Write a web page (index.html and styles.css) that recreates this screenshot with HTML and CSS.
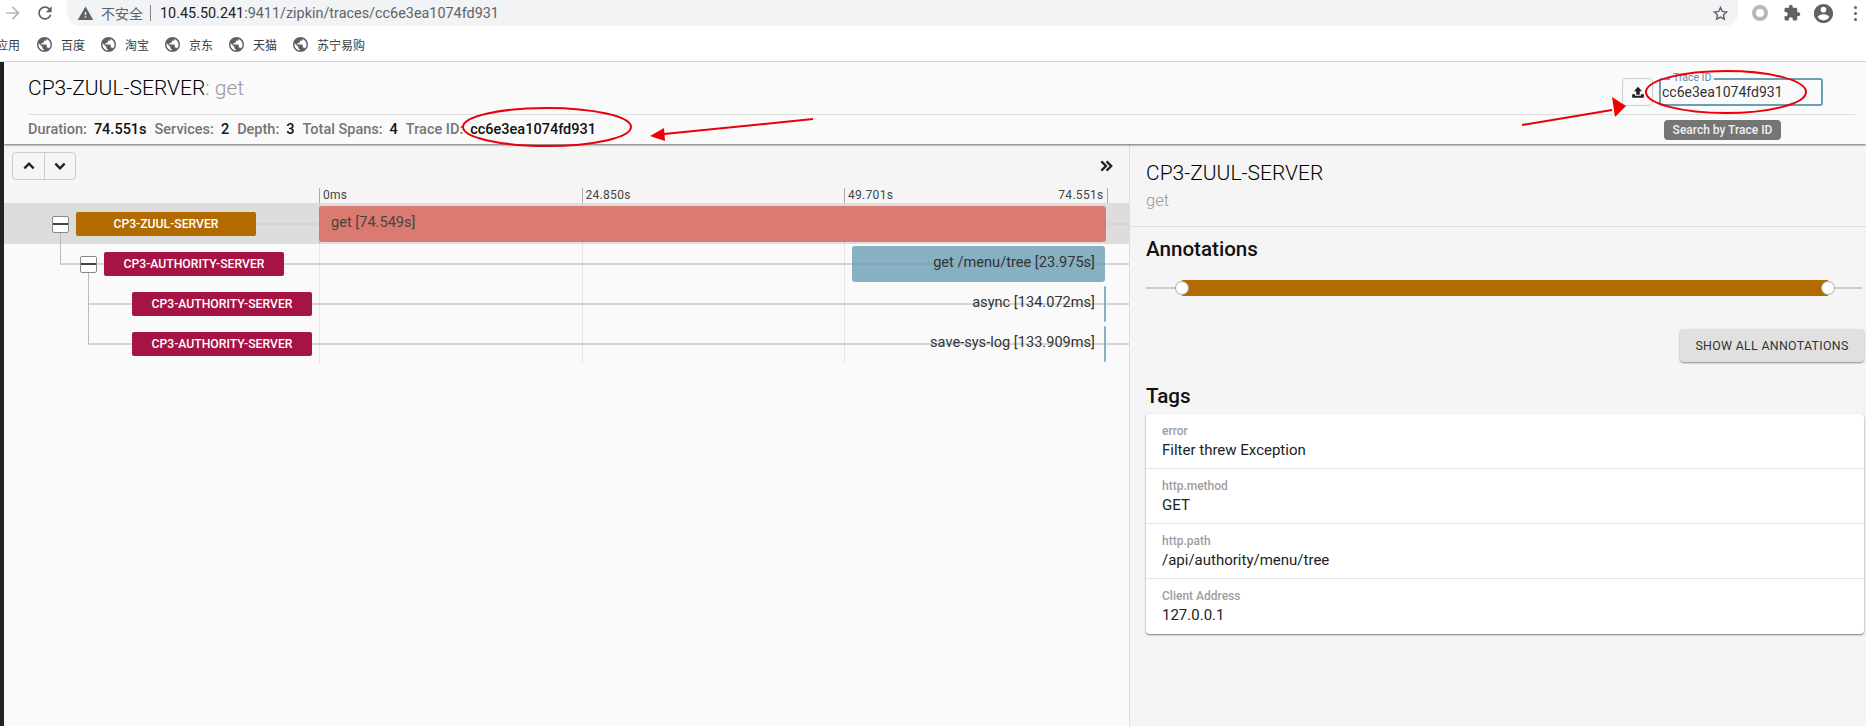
FILE: index.html
```html
<!DOCTYPE html>
<html>
<head>
    <meta charset="utf-8">
    <title>Zipkin</title>
    <link rel="stylesheet" href="styles.css">
</head>
<body>
<svg class="icon-defs" width="0" height="0">
    <symbol id="globe" viewBox="2 2 20 20"><path d="M12 2C6.48 2 2 6.48 2 12s4.48 10 10 10 10-4.48 10-10S17.52 2 12 2zm-1 17.93c-3.95-.49-7-3.85-7-7.93 0-.62.08-1.21.21-1.79L9 15v1c0 1.1.9 2 2 2v1.93zm6.9-2.54c-.26-.81-1-1.39-1.9-1.39h-1v-3c0-.55-.45-1-1-1H8v-2h2c.55 0 1-.45 1-1V7h2c1.1 0 2-.9 2-2v-.41c2.93 1.19 5 4.06 5 7.41 0 2.08-.8 3.97-2.1 5.39z"/></symbol>
</svg>

<div class="toolbar">
    <svg class="tool-icon forward" viewBox="0 0 24 24"><path d="M12 4l-1.41 1.41L16.17 11H4v2h12.17l-5.58 5.59L12 20l8-8z"/></svg>
    <svg class="tool-icon reload" viewBox="0 0 24 24"><path d="M17.65 6.35C16.2 4.9 14.21 4 12 4c-4.42 0-7.99 3.58-7.99 8s3.57 8 7.99 8c3.73 0 6.84-2.55 7.73-6h-2.08c-.82 2.33-3.04 4-5.65 4-3.31 0-6-2.69-6-6s2.69-6 6-6c1.66 0 3.14.69 4.22 1.78L13 11h7V4l-2.35 2.35z"/></svg>
    <div class="omnibox">
        <svg class="warn" viewBox="0 0 24 24"><path d="M1 21h22L12 2 1 21zm12-3h-2v-2h2v2zm0-4h-2v-4h2v4z"/></svg>
        <span class="insecure">不安全</span>
        <span class="omni-sep"></span>
        <span class="url"><b>10.45.50.241</b>:9411/zipkin/traces/cc6e3ea1074fd931</span>
        <svg class="star" viewBox="0 0 24 24"><path d="M12 3.5l2.6 5.6 6.1.7-4.5 4.2 1.2 6-5.4-3-5.4 3 1.2-6-4.5-4.2 6.100-.7z"/></svg>
    </div>
    <span class="ring"></span>
    <svg class="tool-icon puzzle" viewBox="0 0 24 24"><path d="M20.5 11H19V7c0-1.100-.9-2-2-2h-4V3.500C13 2.120 11.880 1 10.500 1S8 2.120 8 3.500V5H4c-1.100 0-1.990.9-1.990 2v3.800H3.500c1.490 0 2.700 1.210 2.700 2.700s-1.210 2.700-2.700 2.700H2V20c0 1.100.9 2 2 2h3.800v-1.500c0-1.490 1.210-2.700 2.700-2.700 1.490 0 2.700 1.210 2.700 2.700V22H17c1.100 0 2-.9 2-2v-4h1.500c1.380 0 2.500-1.120 2.500-2.500S21.880 11 20.500 11z"/></svg>
    <svg class="tool-icon avatar" viewBox="0 0 24 24"><path d="M12 2C6.480 2 2 6.480 2 12s4.480 10 10 10 10-4.480 10-10S17.520 2 12 2zm0 3c1.660 0 3 1.340 3 3s-1.340 3-3 3-3-1.340-3-3 1.340-3 3-3zm0 14.200c-2.500 0-4.710-1.280-6-3.220.03-1.990 4-3.080 6-3.080 1.990 0 5.970 1.090 6 3.080-1.290 1.940-3.500 3.220-6 3.220z"/></svg>
    <span class="kebab"><i></i><i></i><i></i></span>
</div>

<div class="bookmarks">
    <span class="apps">应用</span>
    <span class="bookmark"><svg><use href="#globe"/></svg>百度</span>
    <span class="bookmark"><svg><use href="#globe"/></svg>淘宝</span>
    <span class="bookmark"><svg><use href="#globe"/></svg>京东</span>
    <span class="bookmark"><svg><use href="#globe"/></svg>天猫</span>
    <span class="bookmark"><svg><use href="#globe"/></svg>苏宁易购</span>
</div>

<div class="app">
    <div class="trace-header">
        <div class="header-top">
            <h1 class="trace-title">CP3-ZUUL-SERVER<span class="muted">: get</span></h1>
            <div class="search">
                <button class="upload" type="button">
                    <svg viewBox="0 0 24 24"><path d="M12 3l7 7.500h-4v6H9v-6H5z"/><path d="M2 16h5v2.500h10V16h5v6H2z"/></svg>
                </button>
                <div class="trace-field">
                    <span class="trace-legend">Trace ID</span>
                    <input class="trace-input" type="text" value="cc6e3ea1074fd931">
                </div>
            </div>
        </div>
        <div class="stats">
            <span class="stat-name">Duration:</span><span class="stat-value">74.551s</span>
            <span class="stat-name">Services:</span><span class="stat-value">2</span>
            <span class="stat-name">Depth:</span><span class="stat-value">3</span>
            <span class="stat-name">Total Spans:</span><span class="stat-value">4</span>
            <span class="stat-name">Trace ID:</span><span class="stat-value">cc6e3ea1074fd931</span>
        </div>
        <div class="tooltip">Search by Trace ID</div>
    </div>

    <div class="content">
        <div class="timeline-panel">
            <div class="timeline-top">
                <div class="btn-group">
                    <button class="btn-part" type="button"><svg viewBox="0 0 24 24"><path d="M4 16l8-8 8 8"/></svg></button>
                    <button class="btn-part" type="button"><svg viewBox="0 0 24 24"><path d="M4 8l8 8 8-8"/></svg></button>
                </div>
                <svg class="collapse" viewBox="0 0 24 24"><path d="M4 4l8 8-8 8M13 4l8 8-8 8"/></svg>
            </div>
            <div class="ticks">
                <span class="tick">0ms</span>
                <span class="tick">24.850s</span>
                <span class="tick tick-end"><span>49.701s</span><span>74.551s</span></span>
            </div>
            <div class="rows">
                <div class="row row-selected">
                    <i class="row-line line-0"></i>
                    <div class="row-tree depth-0">
                        <span class="toggle"></span>
                        <span class="service zuul">CP3-ZUUL-SERVER</span>
                    </div>
                    <div class="row-bars">
                        <div class="bar bar-red" style="left:0%;width:100%"></div>
                        <span class="bar-label label-left">get [74.549s]</span>
                    </div>
                </div>
                <div class="row">
                    <i class="row-line line-1"></i>
                    <i class="elbow elbow-1"></i>
                    <div class="row-tree depth-1">
                        <span class="toggle"></span>
                        <span class="service authority">CP3-AUTHORITY-SERVER</span>
                    </div>
                    <div class="row-bars">
                        <div class="bar bar-blue" style="left:67.7%;width:32.15%"></div>
                        <span class="bar-label label-right">get /menu/tree [23.975s]</span>
                    </div>
                </div>
                <div class="row">
                    <i class="row-line line-2"></i>
                    <i class="elbow elbow-2"></i>
                    <div class="row-tree depth-2">
                        <span class="service authority">CP3-AUTHORITY-SERVER</span>
                    </div>
                    <div class="row-bars">
                        <div class="bar bar-blue" style="left:99.75%;width:0.25%"></div>
                        <span class="bar-label label-right">async [134.072ms]</span>
                    </div>
                </div>
                <div class="row">
                    <i class="row-line line-2"></i>
                    <i class="elbow elbow-3"></i>
                    <div class="row-tree depth-2">
                        <span class="service authority">CP3-AUTHORITY-SERVER</span>
                    </div>
                    <div class="row-bars">
                        <div class="bar bar-blue" style="left:99.75%;width:0.25%"></div>
                        <span class="bar-label label-right">save-sys-log [133.909ms]</span>
                    </div>
                </div>
                <div class="gridlines"><i></i><i></i><i></i></div>
            </div>
        </div>

        <div class="detail-panel">
            <div class="detail-head">
                <div class="detail-service">CP3-ZUUL-SERVER</div>
                <div class="detail-span">get</div>
            </div>
            <div class="detail-body">
                <h2 class="section-title">Annotations</h2>
                <div class="slider">
                    <span class="slider-rail rail-start"></span>
                    <span class="slider-fill"><i class="handle handle-start"></i><i class="handle handle-end"></i></span>
                    <span class="slider-rail rail-end"></span>
                </div>
                <div class="actions">
                    <button class="show-all" type="button">Show all annotations</button>
                </div>
                <h2 class="section-title tags-title">Tags</h2>
                <div class="tag-card">
                    <div class="tag"><div class="tag-key">error</div><div class="tag-value">Filter threw Exception</div></div>
                    <div class="tag"><div class="tag-key">http.method</div><div class="tag-value">GET</div></div>
                    <div class="tag"><div class="tag-key">http.path</div><div class="tag-value">/api/authority/menu/tree</div></div>
                    <div class="tag"><div class="tag-key">Client Address</div><div class="tag-value">127.0.0.1</div></div>
                </div>
            </div>
        </div>
    </div>
</div>

<!-- red marks someone drew on top of the screenshot -->
<svg class="marks" width="1866" height="726" viewBox="0 0 1866 726">
    <ellipse cx="1726" cy="92" rx="80" ry="21"/>
    <ellipse cx="547" cy="127" rx="84" ry="19"/>
    <path d="M1522 125L1612 110"/>
    <path class="head" d="M1626 106L1612 97L1615 117z"/>
    <path d="M813 119L664 134"/>
    <path class="head" d="M650 136L664 128L665 141z"/>
</svg>
</body>
</html>
```

FILE: styles.css
```css
* {
    box-sizing: border-box;
}

html, body {
    margin: 0;
    height: 726px;
    overflow: hidden;
}

body {
    position: relative;
    background: #fff;
    font-family: Roboto, "Noto Sans CJK SC", sans-serif;
    color: #222;
}

.icon-defs {
    position: absolute;
}

/* browser chrome */
.toolbar {
    display: flex;
    align-items: center;
    height: 26px;
}

.tool-icon {
    fill: #5f6368;
    flex: none;
}

.forward {
    width: 20px;
    height: 20px;
    margin-left: 3px;
    fill: #b4b6b9;
}

.reload {
    width: 20px;
    height: 20px;
    margin-left: 12px;
}

.omnibox {
    display: flex;
    align-items: center;
    width: 1671px;
    height: 26px;
    margin-left: 12px;
    padding: 0 8px 0 10px;
    background: #f1f3f4;
    border-radius: 0 0 13px 13px;
}

.warn {
    width: 17px;
    height: 17px;
    fill: #5f6368;
}

.insecure {
    margin-left: 7px;
    font-size: 14px;
    color: #5f6368;
}

.omni-sep {
    width: 1px;
    height: 16px;
    margin: 0 9px 0 7px;
    background: #80868b;
}

.url {
    flex: 1;
    font-size: 14.4px;
    color: #5f6368;
}

.url b {
    font-weight: 400;
    color: #202124;
}

.star {
    width: 17px;
    height: 17px;
    margin-right: 1px;
    fill: none;
    stroke: #5f6368;
    stroke-width: 2;
}

.ring {
    width: 16px;
    height: 16px;
    margin-left: 14px;
    border: 4px solid #b8b8b8;
    border-radius: 50%;
}

.puzzle {
    width: 18px;
    height: 18px;
    margin-left: 15px;
}

.avatar {
    width: 23px;
    height: 23px;
    margin-left: 11px;
}

.kebab {
    display: flex;
    flex-direction: column;
    gap: 3px;
    margin-left: 19px;
}

.kebab i {
    width: 3px;
    height: 3px;
    background: #5f6368;
    border-radius: 50%;
}

.bookmarks {
    display: flex;
    align-items: center;
    height: 36px;
    padding-top: 1px;
    font-size: 12px;
    color: #3c4043;
    border-bottom: 1px solid #dadce0;
}

.apps {
    width: 41px;
    margin-left: -4px;
}

.bookmark {
    display: flex;
    align-items: center;
    gap: 9px;
    margin-right: 16px;
}

.bookmark svg {
    width: 15px;
    height: 15px;
    fill: #5f6368;
}

/* zipkin app */
.app {
    display: flex;
    flex-direction: column;
    height: 664px;
    border-left: 4px solid #222;
}

.trace-header {
    position: relative;
    z-index: 2;
    height: 82px;
    padding: 0 11px 0 24px;
    background: #fafafa;
    box-shadow: 0 1px 2px rgba(0, 0, 0, .6);
}

.header-top {
    display: flex;
    justify-content: space-between;
    height: 53px;
    border-bottom: 1px solid #ddd;
}

.trace-title {
    margin: 14px 0 0;
    font-size: 21px;
    line-height: 24px;
    font-weight: 300;
    color: #000;
}

.muted {
    color: #999;
}

.search {
    display: flex;
    gap: 6px;
    margin: 16px 32px 0 0;
    height: 28px;
}

.upload {
    width: 31px;
    height: 28px;
    padding: 0;
    background: #fafafa;
    border: 1px solid #ccc;
    border-radius: 4px;
}

.upload svg {
    display: block;
    width: 14px;
    height: 14px;
    margin: auto;
    fill: #222;
}

.trace-field {
    position: relative;
    width: 164px;
}

.trace-input {
    display: block;
    width: 100%;
    height: 28px;
    padding: 0 1px;
    font-family: Roboto, sans-serif;
    font-size: 14px;
    color: #333;
    background: transparent;
    border: 2px solid #6a9fb5;
    border-radius: 3px;
    outline: none;
}

.trace-legend {
    position: absolute;
    left: 11px;
    top: -6px;
    padding: 0 3px;
    font-size: 10.5px;
    line-height: 12px;
    color: #5a8ca5;
    background: #fafafa;
}

.tooltip {
    position: absolute;
    left: 1660px;
    top: 58px;
    width: 117px;
    height: 20px;
    font-size: 12px;
    font-weight: 500;
    line-height: 20px;
    text-align: center;
    color: #f0f0f0;
    background: #757575;
    border-radius: 4px;
}

.stats {
    display: flex;
    align-items: center;
    height: 28px;
    font-size: 14.5px;
    font-weight: 500;
}

.stat-name {
    margin-right: 7px;
    color: #757575;
}

.stat-value {
    margin-right: 8px;
    color: #111;
}

.content {
    flex: 1;
    display: flex;
    margin-top: 1px;
}

/* trace timeline */
.timeline-panel {
    width: 1126px;
    background: #fafafa;
    border-right: 1px solid #ddd;
}

.timeline-top {
    display: flex;
    justify-content: space-between;
    align-items: center;
    height: 43px;
    padding: 0 16px 1px 8px;
    background: #f5f5f5;
}

.btn-group {
    display: flex;
    height: 28px;
    border: 1px solid #ccc;
    border-radius: 4px;
}

.btn-part {
    width: 31px;
    padding: 0;
    background: none;
    border: 0;
}

.btn-part + .btn-part {
    border-left: 1px solid #ccc;
}

.btn-part svg {
    display: block;
    width: 14px;
    height: 14px;
    margin: auto;
    fill: none;
    stroke: #222;
    stroke-width: 4;
}

.collapse {
    width: 14px;
    height: 14px;
    fill: none;
    stroke: #222;
    stroke-width: 4;
}

.ticks {
    display: grid;
    grid-template-columns: 262.5px 262.5px 263.5px;
    height: 16px;
    padding-left: 315px;
    background: #f5f5f5;
}

.tick {
    padding-left: 3px;
    height: 15px;
    font-size: 12px;
    letter-spacing: .3px;
    line-height: 15px;
    color: #444;
    border-left: 1px solid #aaa;
}

.tick-end {
    display: flex;
    justify-content: space-between;
    padding-right: 3px;
    border-right: 1px solid #aaa;
}

.rows {
    position: relative;
}

.row {
    position: relative;
    display: flex;
    height: 40px;
}

.row-selected {
    background: #ddd;
    box-shadow: 0 -1px 0 #ddd;
}

.row-line {
    position: absolute;
    top: 19px;
    right: 0;
    height: 2px;
    background: #d6d6d6;
}

.line-0 { left: 60px; }
.line-1 { left: 56px; }
.line-2 { left: 84px; }

.elbow {
    position: absolute;
    width: 1px;
    background: #bbb;
}

.elbow-1 { left: 56px; top: -12px; height: 33px; }
.elbow-2 { left: 84px; top: -12px; height: 33px; }
.elbow-3 { left: 84px; top: -20px; height: 41px; }

.row-tree {
    position: relative;
    z-index: 1;
    display: flex;
    align-items: center;
    width: 315px;
    flex: none;
}

.depth-0 { padding-left: 48px; }
.depth-1 { padding-left: 76px; }
.depth-2 { padding-left: 128px; }

.toggle {
    position: relative;
    width: 17px;
    height: 17px;
    margin-right: 7px;
    background: #fff;
    border: 1px solid #888;
    border-radius: 2px;
}

.toggle::after {
    content: "";
    position: absolute;
    left: 0;
    right: 0;
    top: 6px;
    height: 2px;
    background: #444;
}

.service {
    width: 180px;
    height: 24px;
    font-size: 12.2px;
    font-weight: 500;
    line-height: 24px;
    text-align: center;
    color: #fff;
    border-radius: 2px;
}

.zuul { background: #b16b00; }
.authority { background: #a51444; }

.row-bars {
    position: relative;
    z-index: 1;
    width: 787px;
    flex: none;
}

.bar {
    position: absolute;
    top: 2px;
    height: 36px;
    border-radius: 3px;
    opacity: .8;
}

.bar-red { background: #db6155; }
.bar-blue { background: #6a9fb5; }

.bar-label {
    position: absolute;
    top: 9px;
    font-size: 14.6px;
    line-height: 18px;
    color: #333;
}

.label-left { left: 12px; color: #444; }
.label-right { right: 11px; }

.gridlines {
    position: absolute;
    top: 0;
    left: 315px;
    display: grid;
    grid-template-columns: repeat(3, 262.5px);
    height: 160px;
}

.gridlines i {
    border-left: 1px solid rgba(0, 0, 0, .08);
}

/* span detail */
.detail-panel {
    flex: 1;
    background: #f5f5f5;
}

.detail-head {
    height: 82px;
    padding: 16px 16px 0;
    border-bottom: 1px solid #ddd;
}

.detail-service {
    font-size: 21px;
    line-height: 24px;
    font-weight: 300;
    color: #000;
}

.detail-span {
    margin-top: 4px;
    font-size: 16.5px;
    line-height: 24px;
    font-weight: 300;
    color: #999;
}

.detail-body {
    padding: 10px 2px 0 16px;
}

.section-title {
    margin: 0;
    font-size: 20.6px;
    line-height: 24px;
    font-weight: 500;
    color: #111;
}

.slider {
    display: flex;
    align-items: center;
    height: 16px;
    margin: 19px 2px 0 0;
}

.slider-rail {
    height: 2px;
    background: #ccc;
}

.rail-start { width: 36px; }
.rail-end { width: 34px; }

.slider-fill {
    position: relative;
    flex: 1;
    height: 16px;
    background: #b16b00;
}

.handle {
    position: absolute;
    top: 1px;
    width: 14px;
    height: 14px;
    background: #fff;
    border: 1px solid #aaa;
    border-radius: 50%;
}

.handle-start { left: -7px; }
.handle-end { right: -7px; }

.actions {
    display: flex;
    justify-content: flex-end;
    margin-top: 33px;
}

.show-all {
    width: 184px;
    height: 33px;
    padding: 0;
    font-family: Roboto, sans-serif;
    font-size: 12.4px;
    font-weight: 400;
    letter-spacing: .3px;
    text-transform: uppercase;
    color: #333;
    background: #e0e0e0;
    border: 0;
    border-radius: 4px;
    box-shadow: 0 1px 2px rgba(0, 0, 0, .45);
}

.tags-title {
    margin-top: 22px;
}

.tag-card {
    margin-top: 6px;
    background: #fff;
    border-radius: 4px;
    box-shadow: 0 1px 2px rgba(0, 0, 0, .5);
}

.tag {
    height: 55px;
    padding: 9px 16px 0;
    border-bottom: 1px solid #e4e4e4;
}

.tag:last-child {
    border-bottom: 0;
}

.tag-key {
    font-size: 12px;
    font-weight: 500;
    line-height: 16px;
    color: #9e9e9e;
}

.tag-value {
    margin-top: 1px;
    font-size: 15px;
    line-height: 20px;
    color: #222;
}

/* drawn on top of everything */
.marks {
    position: absolute;
    left: 0;
    top: 0;
    z-index: 5;
    pointer-events: none;
    fill: none;
    stroke: #e8000b;
    stroke-width: 2;
}

.marks .head {
    fill: #f00000;
    stroke: none;
}
```
